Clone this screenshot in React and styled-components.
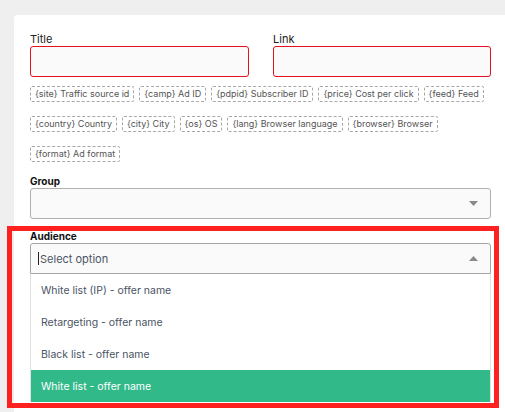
import React from "react";
import styled, { createGlobalStyle } from "styled-components";

const MACROS = [
  "{site} Traffic source id",
  "{camp} Ad ID",
  "{pdpid} Subscriber ID",
  "{price} Cost per click",
  "{feed} Feed",
  "{country} Country",
  "{city} City",
  "{os} OS",
  "{lang} Browser language",
  "{browser} Browser",
  "{format} Ad format",
];

const OPTIONS = [
  { id: 1, title: "White list (IP) - offer name" },
  { id: 2, title: "Retargeting - offer name" },
  { id: 3, title: "Black list - offer name" },
  { id: 4, title: "White list - offer name", active: true },
];

const GlobalStyle = createGlobalStyle`
  html, body {
    margin: 0;
    padding: 0;
    background: #efefef;
  }
  body {
    font-family: Inter, "Noto Sans", sans-serif;
    color: #222;
  }
`;

const Arrow = ({ up }) => (
  <svg width="9" height="5" viewBox="0 0 9 5">
    <path d={up ? "M0 5 L4.5 0 L9 5 Z" : "M0 0 L4.5 5 L9 0 Z"} fill="#888" />
  </svg>
);

const App = () => {
  return (
    <Page>
      <GlobalStyle />
      <Card>
        <InputRow>
          <Field>
            <Label>Title</Label>
            <TextInput invalid />
          </Field>
          <Field>
            <Label>Link</Label>
            <TextInput invalid />
          </Field>
        </InputRow>

        <MacroList>
          {MACROS.map((m) => (
            <Macro key={m}>{m}</Macro>
          ))}
        </MacroList>

        <Field>
          <BoldLabel>Group</BoldLabel>
          <Select>
            <span />
            <Arrow />
          </Select>
        </Field>

        <AudienceSection>
          <BoldLabel>Audience</BoldLabel>
          <Select>
            <Placeholder>
              <Caret />
              Select option
            </Placeholder>
            <Arrow up />
          </Select>
          <OptionList>
            {OPTIONS.map(({ id, title, active }) => (
              <Option key={id} active={active}>
                {title}
              </Option>
            ))}
          </OptionList>
          <Highlight />
        </AudienceSection>
      </Card>
    </Page>
  );
};

export default App;

const Page = styled.div`
  width: 505px;
  height: 412px;
  overflow: hidden;
  padding: 15px 0 0 14px;
  box-sizing: border-box;
`;

const Card = styled.main`
  background: #fff;
  border-radius: 4px 0 0 0;
  padding: 17px 14px 20px 16px;
  min-height: 420px;
  box-sizing: border-box;
`;

const InputRow = styled.div`
  display: grid;
  grid-template-columns: 219px 218px;
  column-gap: 24px;
`;

const Field = styled.div`
  display: flex;
  flex-direction: column;
`;

const Label = styled.label`
  font-size: 11px;
  line-height: 14px;
  color: #222;
`;

const BoldLabel = styled(Label)`
  font-size: 10px;
  font-weight: 700;
  color: #111;
`;

const TextInput = styled.div`
  height: 31px;
  box-sizing: border-box;
  border: 1px solid ${({ invalid }) => (invalid ? "#e8101f" : "#b5b5b5")};
  border-radius: 3px;
  background: #fafafa;
`;

const MacroList = styled.div`
  display: flex;
  flex-wrap: wrap;
  column-gap: 5px;
  row-gap: 14px;
  margin: 9px 0 12px;
`;

const Macro = styled.span`
  height: 16px;
  box-sizing: border-box;
  padding: 0 4px;
  border: 1px dashed #a8a8a8;
  border-radius: 2px;
  font-size: 9px;
  line-height: 14px;
  color: #555;
  white-space: nowrap;
`;

const Select = styled.div`
  height: 31px;
  box-sizing: border-box;
  display: flex;
  align-items: center;
  justify-content: space-between;
  padding: 0 12px 0 7px;
  border: 1px solid #b0b0b0;
  border-radius: 3px;
  background: #fafafa;
`;

const AudienceSection = styled(Field)`
  position: relative;
  margin-top: 10px;

  ${Select} {
    border-radius: 3px 3px 0 0;
    border-color: #a5a5a5;
  }
`;

const Placeholder = styled.span`
  display: flex;
  align-items: center;
  font-size: 11px;
  color: #4a5464;
`;

const Caret = styled.span`
  width: 1px;
  height: 13px;
  background: #222;
  margin-right: 1px;
`;

const OptionList = styled.ul`
  list-style: none;
  margin: 0;
  padding: 0;
  border-left: 1px solid #e2e2e2;
  border-right: 1px solid #e2e2e2;
`;

const Option = styled.li`
  height: 32px;
  display: flex;
  align-items: center;
  padding-left: 10px;
  font-size: 10.5px;
  color: ${({ active }) => (active ? "#fff" : "#4a5464")};
  background: ${({ active }) => (active ? "#32b98a" : "#fff")};
`;

const Highlight = styled.div`
  position: absolute;
  left: -23px;
  right: -8px;
  top: -3px;
  bottom: -6px;
  border: 5px solid #ff2020;
  pointer-events: none;
`;
